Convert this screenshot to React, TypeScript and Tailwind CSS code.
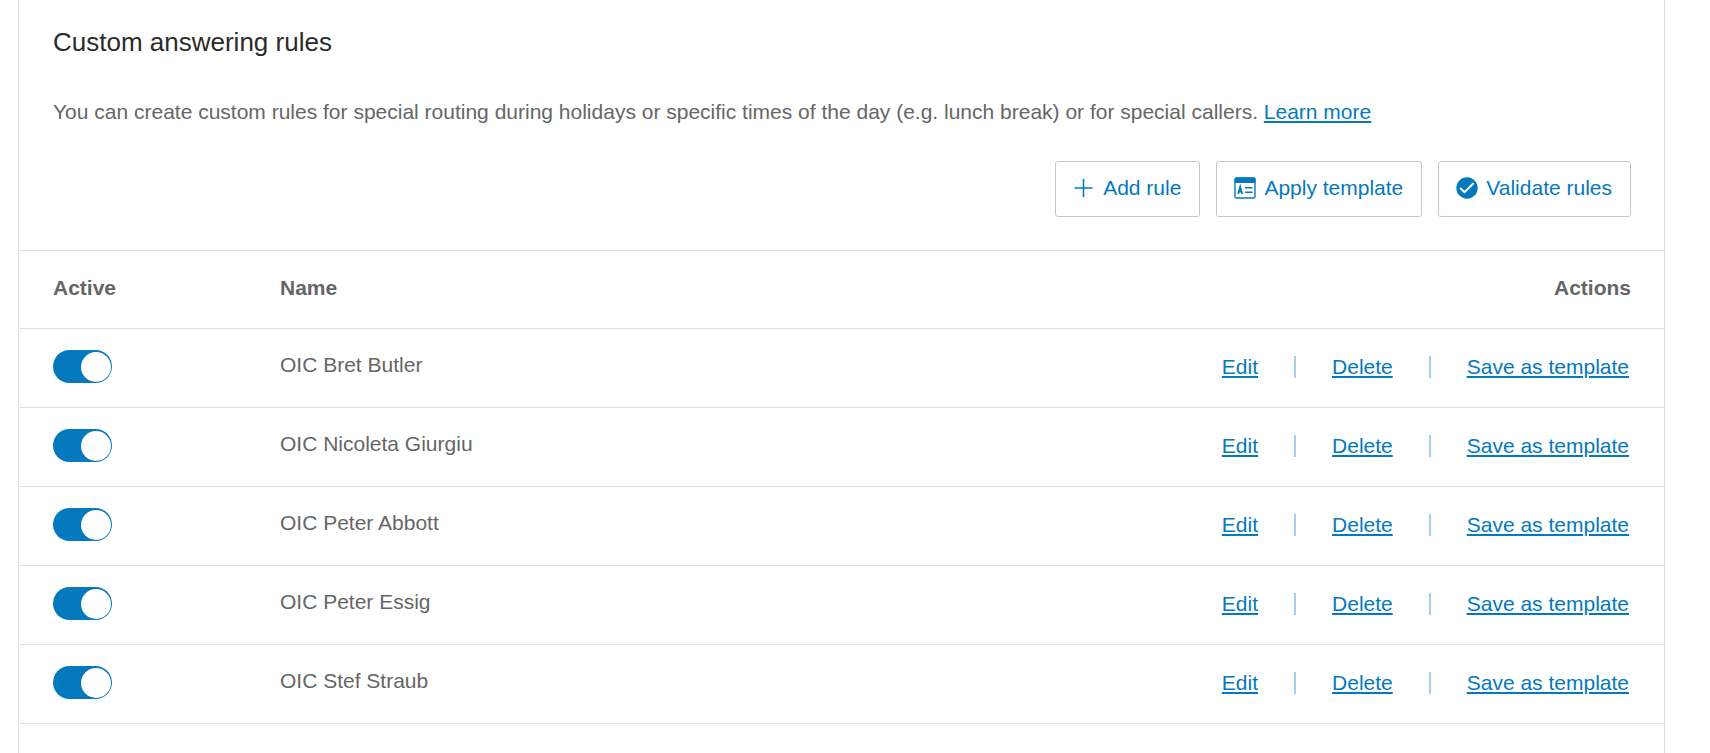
import { useState } from "react";

interface Rule {
  id: string;
  name: string;
  active: boolean;
}

const RULES: Rule[] = [
  { id: "bret-butler", name: "OIC Bret Butler", active: true },
  { id: "nicoleta-giurgiu", name: "OIC Nicoleta Giurgiu", active: true },
  { id: "peter-abbott", name: "OIC Peter Abbott", active: true },
  { id: "peter-essig", name: "OIC Peter Essig", active: true },
  { id: "stef-straub", name: "OIC Stef Straub", active: true },
];

const LINK = "text-[#0579bd] underline decoration-2 underline-offset-2 hover:text-[#045d92]";
const BUTTON =
  "flex h-14 items-center gap-2 rounded-[3px] border border-[#c7c7c7] pr-[18px] pb-0.5 pl-[17px] text-[#0579bd] hover:bg-sky-50";

export default function App() {
  const [rules, setRules] = useState(RULES);

  const toggle = (id: string) =>
    setRules((prev) => prev.map((r) => (r.id === id ? { ...r, active: !r.active } : r)));

  return (
    <main className="min-h-screen bg-white pr-[45px] pl-[18px] font-['Liberation_Sans',Arial,sans-serif] text-[21px] leading-6 text-[#666666]">
      <section className="min-h-screen border-x border-[#dedede] pl-px">
        <div className="px-[33px] pt-[26px]">
          <h1 className="text-[26px] leading-8 text-[#2b2b2b]">Custom answering rules</h1>
          <p className="mt-[42px]">
            You can create custom rules for special routing during holidays or specific times of the
            day (e.g. lunch break) or for special callers.{" "}
            <a href="#learn-more" className={LINK}>
              Learn more
            </a>
          </p>
          <div className="mt-[37px] flex justify-end gap-4">
            <button type="button" className={BUTTON}>
              <PlusIcon />
              Add rule
            </button>
            <button type="button" className={BUTTON}>
              <TemplateIcon />
              Apply template
            </button>
            <button type="button" className={BUTTON}>
              <ValidIcon />
              Validate rules
            </button>
          </div>
        </div>

        <table className="mt-[33px] w-full border-collapse border-y border-[#dedede]">
          <thead>
            <tr className="h-[78px] text-left">
              <th scope="col" className="w-[227px] pb-[3px] pl-[33px] font-bold">
                Active
              </th>
              <th scope="col" className="pb-[3px] pl-[33px] font-bold">
                Name
              </th>
              <th scope="col" className="pr-[33px] pb-[3px] text-right font-bold">
                Actions
              </th>
            </tr>
          </thead>
          <tbody>
            {rules.map((rule) => (
              <RuleRow key={rule.id} rule={rule} onToggle={() => toggle(rule.id)} />
            ))}
          </tbody>
        </table>
      </section>
    </main>
  );
}

function RuleRow({ rule, onToggle }: { rule: Rule; onToggle: () => void }) {
  return (
    <tr className="h-[79px] border-t border-[#dedede]">
      <td className="pb-[3px] pl-[33px]">
        <label className="flex h-[33px] w-[59px] cursor-pointer items-center rounded-full bg-gray-400 px-px has-checked:justify-end has-checked:bg-[#0579bd]">
          <input
            type="checkbox"
            role="switch"
            aria-label={`${rule.name} active`}
            checked={rule.active}
            onChange={onToggle}
            className="peer sr-only"
          />
          <span className="size-[30px] rounded-full bg-white" />
        </label>
      </td>
      <td className="pb-[7px] pl-[33px]">{rule.name}</td>
      <td className="pr-[35px] pb-[3px]">
        <div className="flex items-center justify-end gap-9">
          <a href="#edit" className={LINK}>
            Edit
          </a>
          <Divider />
          <a href="#delete" className={LINK}>
            Delete
          </a>
          <Divider />
          <a href="#save" className={LINK}>
            Save as template
          </a>
        </div>
      </td>
    </tr>
  );
}

function Divider() {
  return <span aria-hidden="true" className="h-[22px] w-0.5 bg-[#a8cfe8]" />;
}

// --- Button icons ------------------------------------------------------------

function PlusIcon() {
  return (
    <svg className="size-[22px]" viewBox="0 0 22 22" fill="none" stroke="#0579bd" strokeWidth="1.6" aria-hidden="true">
      <path d="M10.5 2v18M1.5 11h18" />
    </svg>
  );
}

function TemplateIcon() {
  return (
    <svg className="size-[22px]" viewBox="0 0 22 22" fill="none" stroke="#0579bd" aria-hidden="true">
      <rect x="1" y="1" width="20" height="20" rx="1.5" strokeWidth="1.4" />
      <path d="M.5 2.5Q.5.5 2.5.5h17q2 0 2 2V6H.5z" fill="#0579bd" stroke="none" />
      <path d="M4.2 17 6.2 9.8l2 7.2M4.8 14.6h2.8" strokeWidth="1.7" />
      <path d="M11 10.7h7.5M11 15.3h7.5" strokeWidth="1.4" />
    </svg>
  );
}

function ValidIcon() {
  return (
    <svg className="size-[22px]" viewBox="0 0 22 22" fill="none" aria-hidden="true">
      <circle cx="11" cy="11" r="10.7" fill="#0579bd" />
      <path d="m4.2 11 4.2 4.2 9.2-9" stroke="#fff" strokeWidth="2" />
    </svg>
  );
}
